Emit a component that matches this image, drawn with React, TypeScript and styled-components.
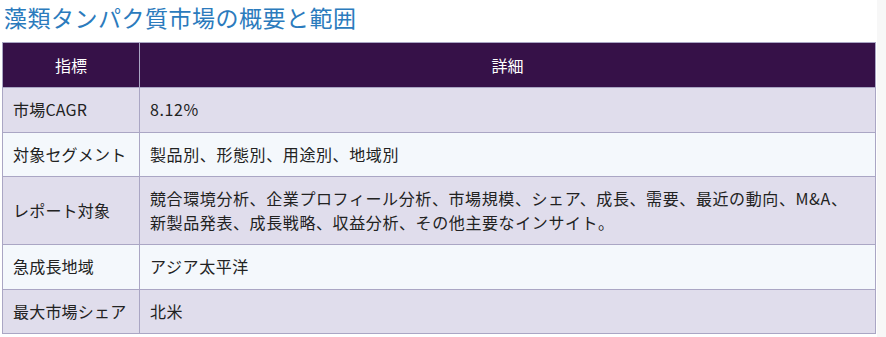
import styled, { createGlobalStyle } from "styled-components";

const GlobalStyle = createGlobalStyle`
    html, body {
        margin: 0;
        padding: 0;
        background: #f7f7f7;
    }
`;

const Page = styled.div`
    width: 873px;
    padding: 0 2px 4px 2px;
    background: #ffffff;
    font-family: "Noto Sans CJK JP", "Noto Sans", sans-serif;
`;

const Title = styled.h2`
    margin: 0 0 8px 0;
    padding-left: 2px;
    font-size: 23px;
    line-height: 34px;
    font-weight: 400;
    letter-spacing: 0.5px;
    color: #2b7bbd;
`;

const Table = styled.table`
    width: 874px;
    border-collapse: collapse;
    table-layout: fixed;
    border: 1px solid #aaa6c4;
`;

const Th = styled.th`
    background: #361148;
    color: #ffffff;
    font-weight: 400;
    font-size: 16px;
    line-height: 24px;
    padding: 10px;
    text-align: center;
    border: 1px solid #aaa6c4;
`;

const Row = styled.tr<{ $alt: boolean }>`
    background: ${(p) => (p.$alt ? "#f4f8fc" : "#e0ddec")};
`;

const Td = styled.td<{ $label?: boolean }>`
    color: #222222;
    font-size: 16px;
    line-height: 23.5px;
    letter-spacing: ${(p) => (p.$label ? "0.2px" : "0.6px")};
    white-space: ${(p) => (p.$label ? "nowrap" : "normal")};
    padding: ${(p) => (p.$label ? "10px 6px 10px 10px" : "10px")};
    text-align: left;
    vertical-align: middle;
    border: 1px solid #aaa6c4;
`;

interface IRow {
    label: string;
    value: string[];
}

const rows: IRow[] = [
    { label: "市場CAGR", value: ["8.12%"] },
    { label: "対象セグメント", value: ["製品別、形態別、用途別、地域別"] },
    {
        label: "レポート対象",
        value: [
            "競合環境分析、企業プロフィール分析、市場規模、シェア、成長、需要、最近の動向、M&A、",
            "新製品発表、成長戦略、収益分析、その他主要なインサイト。",
        ],
    },
    { label: "急成長地域", value: ["アジア太平洋"] },
    { label: "最大市場シェア", value: ["北米"] },
];

function App() {
    return (
        <>
            <GlobalStyle />
            <Page>
                <Title>藻類タンパク質市場の概要と範囲</Title>
                <Table>
                    <colgroup>
                        <col style={{ width: 137 }} />
                        <col />
                    </colgroup>
                    <thead>
                        <tr>
                            <Th>指標</Th>
                            <Th>詳細</Th>
                        </tr>
                    </thead>
                    <tbody>
                        {rows.map((r, i) => (
                            <Row key={r.label} $alt={i % 2 === 1}>
                                <Td $label>{r.label}</Td>
                                <Td>
                                    {r.value.map((line, j) => (
                                        <span key={j}>
                                            {j > 0 && <br />}
                                            {line}
                                        </span>
                                    ))}
                                </Td>
                            </Row>
                        ))}
                    </tbody>
                </Table>
            </Page>
        </>
    );
}

export default App;
